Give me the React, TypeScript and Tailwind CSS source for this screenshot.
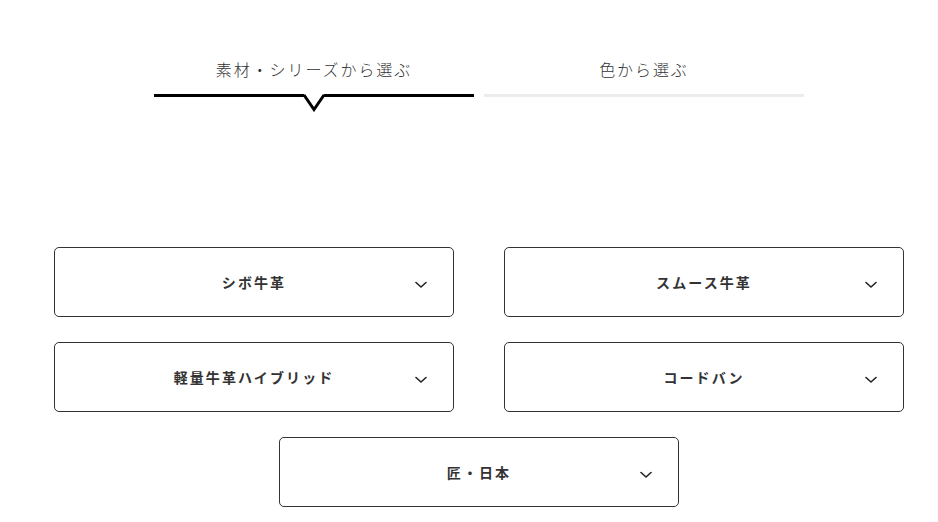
const tabs = [
  { label: '素材・シリーズから選ぶ', active: true },
  { label: '色から選ぶ', active: false },
];

const rows = [
  ['シボ牛革', 'スムース牛革'],
  ['軽量牛革ハイブリッド', 'コードバン'],
  ['匠・日本'],
];

function Chevron() {
  return (
    <svg width="12" height="8" viewBox="0 0 12 8" fill="none" className="absolute right-[26px] top-[33px]">
      <path d="M1 1.5 L6 6 L11 1.5" stroke="#222" strokeWidth="1.6" strokeLinecap="round" strokeLinejoin="round" />
    </svg>
  );
}

function SeriesButton({ label }: { label: string }) {
  return (
    <button className="relative w-[400px] h-[70px] rounded-[5px] border border-[#333] bg-white flex items-center justify-center">
      <span className="text-[14px] font-bold tracking-[0.15em] text-[#333]">{label}</span>
      <Chevron />
    </button>
  );
}

export default function App() {
  return (
    <div
      className="w-[938px] h-[522px] bg-white overflow-hidden"
      style={{ fontFamily: '"Noto Sans CJK JP", "Noto Sans", sans-serif' }}
    >
      {/* Tabs */}
      <div className="flex justify-center gap-[10px] pt-[56px] pl-[20px]">
        {tabs.map((tab) => (
          <div key={tab.label} className="relative w-[320px]">
            <p className="text-center text-[16px] leading-[26px] font-light tracking-[0.12em] text-[#333] pb-[12px]">{tab.label}</p>
            <div className={tab.active ? 'h-[3px] bg-black' : 'h-[3px] bg-[#ececec]'} />
            {tab.active && (
              <svg width="24" height="18" viewBox="0 0 24 18" className="absolute left-1/2 -translate-x-1/2 top-[38px]">
                <path d="M2 0 L12 15 L22 0 Z" fill="white" />
                <path d="M2 1 L12 15.5 L22 1" fill="none" stroke="black" strokeWidth="3" />
              </svg>
            )}
          </div>
        ))}
      </div>

      {/* Series buttons */}
      <div className="flex flex-col items-center gap-[25px] mt-[150px] pl-[20px]">
        {rows.map((row, i) => (
          <div key={i} className="flex gap-[50px]">
            {row.map((label) => (
              <SeriesButton key={label} label={label} />
            ))}
          </div>
        ))}
      </div>
    </div>
  );
}
